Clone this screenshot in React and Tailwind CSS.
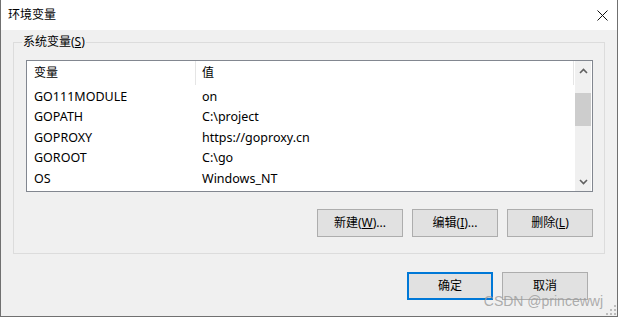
import React from 'react';

const font = { fontFamily: '"Noto Sans", "Noto Sans CJK SC", sans-serif' };

const rows = [
	['GO111MODULE', 'on'],
	['GOPATH', 'C:\\project'],
	['GOPROXY', 'https://goproxy.cn'],
	['GOROOT', 'C:\\go'],
	['OS', 'Windows_NT'],
];

const Arrow = ({ down }) => (
	<svg width="9" height="6" viewBox="0 0 9 6" className={down ? 'rotate-180' : ''}>
		<polyline points="1,5 4.5,1.5 8,5" fill="none" stroke="#606060" strokeWidth="1.6" />
	</svg>
);

const Btn = ({ children, primary }) => (
	<button
		className={
			'w-[86px] h-[28px] bg-[#e1e1e1] text-[12px] text-black flex items-center justify-center ' +
			(primary ? 'border-2 border-[#0078d7]' : 'border border-[#adadad]')
		}
	>
		{children}
	</button>
);

const App = () => {
	return (
		<div
			className="relative w-[618px] h-[317px] border-x border-b border-[#707070] bg-[#f0f0f0] flex flex-col text-black"
			style={font}
		>
			{/* title bar */}
			<div className="h-[30px] bg-white flex items-center justify-between pl-[7px] pr-[9px] shrink-0">
				<span className="text-[12px]">环境变量</span>
				<svg width="11" height="11" viewBox="0 0 11 11">
					<path d="M0.5 0.5 L10.5 10.5 M10.5 0.5 L0.5 10.5" stroke="#111" strokeWidth="1" />
				</svg>
			</div>

			<fieldset className="ml-[12px] mt-[4px] w-[592px] h-[220px] border border-[#dcdcdc] p-0">
				<legend className="ml-[8px] px-[1px] text-[12px] leading-[16px]">
					系统变量(<span className="underline">S</span>)
				</legend>
				<div className="pl-[12px] pt-[10px]">
					<div className="w-[567px] h-[132px] border border-[#828790] bg-white flex">
						<div className="w-[547px] flex flex-col text-[12.5px]">
							<div className="h-[26px] flex items-start text-[12px]">
								<div className="w-[169px] h-[24px] border-r border-[#e5e5e5] pl-[7px] leading-[24px]">变量</div>
								<div className="w-[378px] h-[24px] border-r border-[#e5e5e5] pl-[6px] leading-[24px]">值</div>
							</div>
							{rows.map(([k, v]) => (
								<div key={k} className="h-[20.5px] flex items-center">
									<div className="w-[169px] pl-[7px]">{k}</div>
									<div className="pl-[6px]">{v}</div>
								</div>
							))}
						</div>
						<div className="px-[1px] flex">
							<div className="w-[16px] bg-[#f0f0f0] flex flex-col">
								<div className="h-[20px] flex items-center justify-center"><Arrow /></div>
								<div className="mt-[12px] h-[33px] bg-[#cdcdcd]"></div>
								<div className="flex-1"></div>
								<div className="h-[19px] flex items-center justify-center"><Arrow down /></div>
							</div>
						</div>
					</div>
					<div className="mt-[17px] flex justify-end gap-[9px] w-[567px]">
						<Btn>新建(<span className="underline">W</span>)...</Btn>
						<Btn>编辑(<span className="underline">I</span>)...</Btn>
						<Btn>删除(<span className="underline">L</span>)</Btn>
					</div>
				</div>
			</fieldset>

			<div className="mt-[18px] flex justify-end gap-[9px] pr-[29px]">
				<Btn primary>确定</Btn>
				<Btn>取消</Btn>
			</div>

			<span
				className="absolute right-[14px] bottom-[7px] text-[14px] leading-[16px] text-[#9a9a9a]/80"
				style={{ fontFamily: '"Liberation Sans", sans-serif' }}
			>
				CSDN @princewwj
			</span>
			<svg width="10" height="10" viewBox="0 0 10 10" className="absolute right-[1px] bottom-[1px]">
				<rect x="8" y="0" width="2" height="2" fill="#bcbcbc" />
				<rect x="4" y="4" width="2" height="2" fill="#bcbcbc" />
				<rect x="8" y="4" width="2" height="2" fill="#bcbcbc" />
				<rect x="0" y="8" width="2" height="2" fill="#bcbcbc" />
				<rect x="4" y="8" width="2" height="2" fill="#bcbcbc" />
				<rect x="8" y="8" width="2" height="2" fill="#bcbcbc" />
			</svg>
		</div>
	);
};

export default App;
